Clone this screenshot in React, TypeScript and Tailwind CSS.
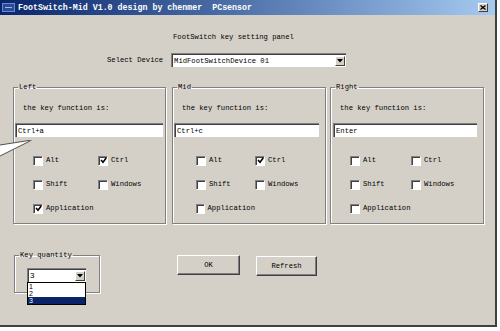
import React from "react";

type CheckItem = { label: string; checked?: boolean };

const font = "font-['Liberation_Mono','DejaVu_Sans_Mono',monospace]";

const CheckBox = ({ label, checked }: CheckItem) => {
  return (
    <div className="flex items-center gap-[4px] h-[10px]">
      <span className="w-[9px] h-[9px] bg-white border-t border-l border-[#808080] shadow-[inset_1px_1px_0_#404040,1px_1px_0_#fff] flex items-center justify-center">
        {checked && (
          <svg width="7" height="7" viewBox="0 0 7 7">
            <path d="M1 3 L3 5.2 L6.2 1" stroke="#000" strokeWidth="1.6" fill="none" />
          </svg>
        )}
      </span>
      <span>{label}</span>
    </div>
  );
};

type GroupProps = {
  title: string;
  value: string;
  checks: CheckItem[];
  width: string;
  inputClass: string;
  gridClass: string;
  children?: React.ReactNode;
};

const KeyGroup = ({ title, value, checks, width, inputClass, gridClass, children }: GroupProps) => {
  return (
    <fieldset
      className={`relative ${width} h-[142px] border border-[#808080] shadow-[inset_1px_1px_0_#fff,1px_1px_0_#fff]`}
    >
      <legend className="ml-[4px] px-[1px] leading-[10px]">{title}</legend>
      <div className="pl-[9px] mt-[11px] leading-[10px]">the key function is:</div>
      <div
        className={`${inputClass} mt-[10px] h-[14px] bg-white border-t border-l border-[#808080] shadow-[inset_1px_1px_0_#404040] flex items-center pl-[2px] leading-[10px]`}
      >
        {value}
      </div>
      <div className={`grid ${gridClass} gap-y-[14px] mt-[18px]`}>
        {checks.map((c, i) => (
          <CheckBox key={i} label={c.label} checked={c.checked} />
        ))}
      </div>
      {children}
    </fieldset>
  );
};

const ComboArrow = () => (
  <span className="w-[10px] h-[10px] bg-[#d4d0c8] border-t border-l border-white border-b border-r border-b-[#404040] border-r-[#404040] flex items-center justify-center">
    <svg width="6" height="4" viewBox="0 0 6 4">
      <path d="M0 0 H6 L3 3.5 Z" fill="#000" />
    </svg>
  </span>
);

const groups = [
  {
    title: "Left",
    value: "Ctrl+a",
    width: "w-[153px]",
    inputClass: "ml-[1px] w-[148px]",
    gridClass: "grid-cols-[65px_auto] pl-[19px]",
    checks: [
      { label: "Alt" },
      { label: "Ctrl", checked: true },
      { label: "Shift" },
      { label: "Windows" },
      { label: "Application", checked: true },
    ],
  },
  {
    title: "Mid",
    value: "Ctrl+c",
    width: "w-[154px]",
    inputClass: "ml-[1px] w-[145px]",
    gridClass: "grid-cols-[59px_auto] pl-[23px]",
    checks: [
      { label: "Alt" },
      { label: "Ctrl", checked: true },
      { label: "Shift" },
      { label: "Windows" },
      { label: "Application" },
    ],
  },
  {
    title: "Right",
    value: "Enter",
    width: "w-[154px]",
    inputClass: "ml-[2px] w-[144px]",
    gridClass: "grid-cols-[61px_auto] pl-[19px]",
    checks: [
      { label: "Alt" },
      { label: "Ctrl" },
      { label: "Shift" },
      { label: "Windows" },
      { label: "Application" },
    ],
  },
];

const App = () => {
  return (
    <div className={`w-[500px] h-[331px] bg-white overflow-hidden text-[7.2px] text-black ${font}`}>
      <div className="w-[497px] h-[327px] bg-[#d4d0c8] border-r-2 border-b-2 border-[#404040] flex flex-col">
        {/* title bar */}
        <div className="h-[15px] bg-gradient-to-r from-[#0a246a] to-[#a6caf0] flex items-center">
          <span className="ml-[2px] w-[13px] h-[9px] bg-[#2a4a9a] border border-[#6a8ad0] flex items-center">
            <span className="mx-[2px] w-full h-[1px] bg-[#a0b8e8]" />
          </span>
          <span className="ml-[3px] text-white font-bold text-[8.3px] leading-[10px] whitespace-pre">
            FootSwitch-Mid V1.0 design by chenmer  PCsensor
          </span>
          <span className="ml-auto mr-[7px] w-[10px] h-[9px] bg-[#d4d0c8] border-t border-l border-white border-b border-r border-b-[#404040] border-r-[#404040] flex items-center justify-center">
            <svg width="6" height="5" viewBox="0 0 6 5">
              <path d="M0.5 0.5 L5.5 4.5 M5.5 0.5 L0.5 4.5" stroke="#000" strokeWidth="1.3" />
            </svg>
          </span>
        </div>

        <div className="pl-[173px] mt-[17px] leading-[10px]">FootSwitch key setting panel</div>

        <div className="flex items-center mt-[11px] pl-[107px]">
          <span className="leading-[10px]">Select Device</span>
          <div className="ml-[8px] w-[175px] h-[14px] bg-white border-t border-l border-[#808080] shadow-[inset_1px_1px_0_#404040] flex items-center pl-[2px] pr-[1px]">
            <span className="flex-1 leading-[10px]">MidFootSwitchDevice 01</span>
            <ComboArrow />
          </div>
        </div>

        <div className="relative flex mt-[15px] pl-[13px]">
          <KeyGroup {...groups[0]}>
            <svg className="absolute left-[-14px] top-[48px]" width="34" height="20" viewBox="0 0 34 20">
              <polygon points="0,5 32,0 0,16" fill="#fff" />
              <path d="M0 5 L32 0 M0 16 L30 1" stroke="#404040" strokeWidth="0.9" fill="none" />
            </svg>
          </KeyGroup>
          <div className="ml-[6px]">
            <KeyGroup {...groups[1]} />
          </div>
          <div className="ml-[4px]">
            <KeyGroup {...groups[2]} />
          </div>
        </div>

        <div className="flex items-start mt-[26px]">
          <fieldset className="ml-[14px] w-[86px] h-[43px] border border-[#808080] shadow-[inset_1px_1px_0_#fff,1px_1px_0_#fff]">
            <legend className="ml-[4px] px-[1px] leading-[10px]">Key quantity</legend>
            <div className="relative ml-[12px] mt-[8px] w-[59px] h-[14px] bg-white border-t border-l border-[#808080] shadow-[inset_1px_1px_0_#404040] flex items-center pl-[2px] pr-[1px]">
              <span className="flex-1 font-['Liberation_Sans',Arial,sans-serif] text-[8px] leading-[10px]">3</span>
              <ComboArrow />
              <div className="absolute left-[-1px] top-[13px] w-[59px] h-[23px] bg-white border border-black font-['Liberation_Sans',Arial,sans-serif] text-[7px] leading-[7px] z-10">
                <div className="pl-[1px] h-[7px]">1</div>
                <div className="pl-[1px] h-[7px]">2</div>
                <div className="pl-[1px] h-[7px] bg-[#0a246a] text-white">3</div>
              </div>
            </div>
          </fieldset>
          <button className="ml-[77px] mt-[5px] w-[63px] h-[20px] bg-[#d4d0c8] border-t border-l border-white border-b border-r border-b-[#404040] border-r-[#404040] shadow-[inset_-1px_-1px_0_#808080] leading-[10px]">
            OK
          </button>
          <button className="ml-[16px] mt-[6px] w-[61px] h-[20px] bg-[#d4d0c8] border-t border-l border-white border-b border-r border-b-[#404040] border-r-[#404040] shadow-[inset_-1px_-1px_0_#808080] leading-[10px]">
            Refresh
          </button>
        </div>
      </div>
    </div>
  );
};

export default App;
